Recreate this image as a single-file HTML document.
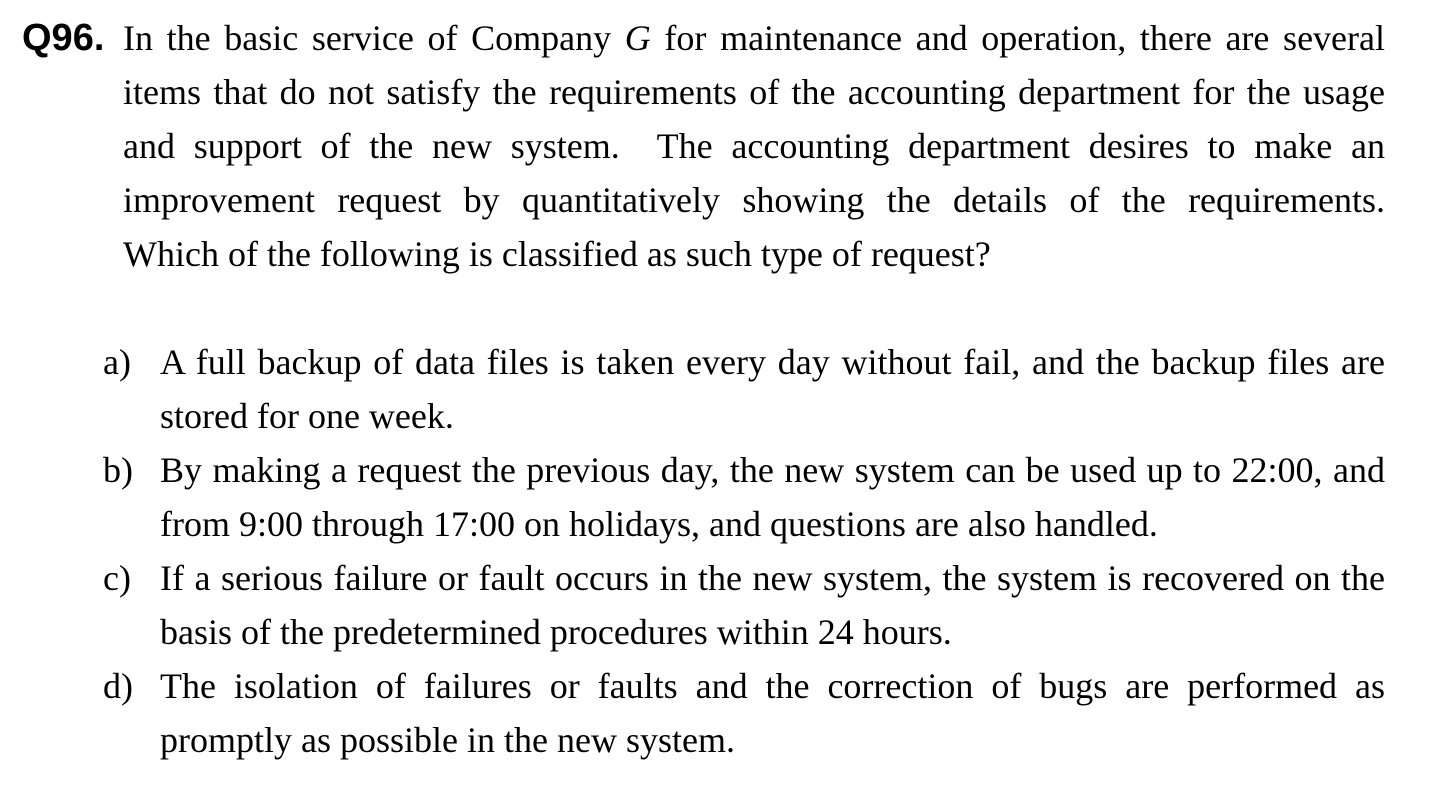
<!DOCTYPE html>
<html><head><meta charset="utf-8"><style>
body{margin:0;width:1450px;height:788px;background:#fff;position:relative;overflow:hidden;font-family:"Liberation Serif",serif;font-size:36px;color:#000}
.l{position:absolute;height:54px;line-height:54px;white-space:nowrap}
.j{text-align:justify;text-align-last:justify;white-space:normal}
.q{position:absolute;left:22px;top:11px;line-height:54px;font-family:"Liberation Sans",sans-serif;font-weight:bold;font-size:38px}
.m{left:123px;width:1262px}
.o{left:160px;width:1225px}
.lab{position:absolute;left:103px;line-height:54px}
</style></head><body>
<div class="q">Q96.</div>
<div class="l m j" style="top:11px">In the basic service of Company <i>G</i> for maintenance and operation, there are several</div>
<div class="l m j" style="top:65px">items that do not satisfy the requirements of the accounting department for the usage</div>
<div class="l m j" style="top:119px">and support of the new system.&nbsp; The accounting department desires to make an</div>
<div class="l m j" style="top:173px">improvement request by quantitatively showing the details of the requirements.</div>
<div class="l m" style="top:227px">Which of the following is classified as such type of request?</div>

<div class="lab" style="top:335px">a)</div>
<div class="l o j" style="top:335px">A full backup of data files is taken every day without fail, and the backup files are</div>
<div class="l o" style="top:389px">stored for one week.</div>
<div class="lab" style="top:443px">b)</div>
<div class="l o j" style="top:443px">By making a request the previous day, the new system can be used up to 22:00, and</div>
<div class="l o" style="top:497px">from 9:00 through 17:00 on holidays, and questions are also handled.</div>
<div class="lab" style="top:551px">c)</div>
<div class="l o j" style="top:551px">If a serious failure or fault occurs in the new system, the system is recovered on the</div>
<div class="l o" style="top:605px">basis of the predetermined procedures within 24 hours.</div>
<div class="lab" style="top:659px">d)</div>
<div class="l o j" style="top:659px">The isolation of failures or faults and the correction of bugs are performed as</div>
<div class="l o" style="top:713px">promptly as possible in the new system.</div>
</body></html>
